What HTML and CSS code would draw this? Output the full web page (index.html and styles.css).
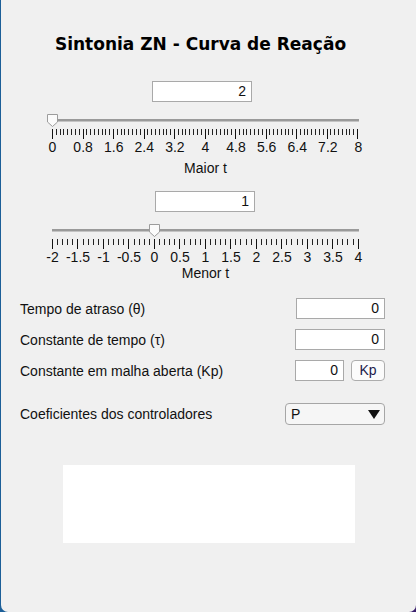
FILE: index.html
```html
<!DOCTYPE html>
<html lang="pt">
<head>
<meta charset="utf-8">
<title>Sintonia ZN - Curva de Reação</title>
<link rel="stylesheet" href="styles.css">
</head>
<body>
<div class="window">
  <h1 class="title">Sintonia ZN - Curva de Reação</h1>

  <section class="slider s1">
    <div class="field slider-field">2</div>
    <div class="track-area">
      <div class="track"></div>
      <svg class="thumb" style="left:-5px" width="11" height="13" viewBox="0 0 11 13"><polygon points="0.5,0.5 10.5,0.5 10.5,8 5.5,12.5 0.5,8" fill="#fbfbfb" stroke="#9c9c9c"/></svg>
    </div>
    <div class="ticks">
      <i class="mj"></i><i></i><i></i><i></i><i></i><i></i><i></i><i></i>
      <i class="mj"></i><i></i><i></i><i></i><i></i><i></i><i></i><i></i>
      <i class="mj"></i><i></i><i></i><i></i><i></i><i></i><i></i><i></i>
      <i class="mj"></i><i></i><i></i><i></i><i></i><i></i><i></i><i></i>
      <i class="mj"></i><i></i><i></i><i></i><i></i><i></i><i></i><i></i>
      <i class="mj"></i><i></i><i></i><i></i><i></i><i></i><i></i><i></i>
      <i class="mj"></i><i></i><i></i><i></i><i></i><i></i><i></i><i></i>
      <i class="mj"></i><i></i><i></i><i></i><i></i><i></i><i></i><i></i>
      <i class="mj"></i><i></i><i></i><i></i><i></i><i></i><i></i><i></i>
      <i class="mj"></i><i></i><i></i><i></i><i></i><i></i><i></i><i></i>
      <i class="mj"></i>
    </div>
    <div class="tick-labels">
      <span>0</span><span>0.8</span><span>1.6</span><span>2.4</span><span>3.2</span><span>4</span><span>4.8</span><span>5.6</span><span>6.4</span><span>7.2</span><span>8</span>
    </div>
    <div class="caption">Maior t</div>
  </section>

  <section class="slider s2">
    <div class="field slider-field">1</div>
    <div class="track-area">
      <div class="track"></div>
      <svg class="thumb" style="left:97px" width="11" height="13" viewBox="0 0 11 13"><polygon points="0.5,0.5 10.5,0.5 10.5,8 5.5,12.5 0.5,8" fill="#fbfbfb" stroke="#9c9c9c"/></svg>
    </div>
    <div class="ticks">
      <i class="mj"></i><i></i><i></i><i></i><i></i>
      <i class="mj"></i><i></i><i></i><i></i><i></i>
      <i class="mj"></i><i></i><i></i><i></i><i></i>
      <i class="mj"></i><i></i><i></i><i></i><i></i>
      <i class="mj"></i><i></i><i></i><i></i><i></i>
      <i class="mj"></i><i></i><i></i><i></i><i></i>
      <i class="mj"></i><i></i><i></i><i></i><i></i>
      <i class="mj"></i><i></i><i></i><i></i><i></i>
      <i class="mj"></i><i></i><i></i><i></i><i></i>
      <i class="mj"></i><i></i><i></i><i></i><i></i>
      <i class="mj"></i><i></i><i></i><i></i><i></i>
      <i class="mj"></i><i></i><i></i><i></i><i></i>
      <i class="mj"></i>
    </div>
    <div class="tick-labels">
      <span>-2</span><span>-1.5</span><span>-1</span><span>-0.5</span><span>0</span><span>0.5</span><span>1</span><span>1.5</span><span>2</span><span>2.5</span><span>3</span><span>3.5</span><span>4</span>
    </div>
    <div class="caption">Menor t</div>
  </section>

  <div class="row r1">
    <span class="label">Tempo de atraso (θ)</span>
    <div class="field f-wide">0</div>
  </div>
  <div class="row r2">
    <span class="label">Constante de tempo (τ)</span>
    <div class="field f-wide2">0</div>
  </div>
  <div class="row r3">
    <span class="label">Constante em malha aberta (Kp)</span>
    <div class="controls">
      <div class="field f-small">0</div>
      <div class="button">Kp</div>
    </div>
  </div>
  <div class="row r4">
    <span class="label">Coeficientes dos controladores</span>
    <div class="dropdown">
      <span>P</span>
      <svg width="12" height="9" viewBox="0 0 12 9"><polygon points="0,0 12,0 6,9" fill="#111"/></svg>
    </div>
  </div>

  <div class="output-box"></div>
</div>
</body>
</html>
```

FILE: styles.css
```css
* { box-sizing: border-box; }

html, body {
  margin: 0;
  padding: 0;
  height: 612px;
  overflow: hidden;
}

body {
  background: linear-gradient(to right, #1c5f98 0%, #235a94 50%, #3a1f6c 100%);
  font-family: "Liberation Sans", Arial, sans-serif;
  font-size: 14px;
  color: #111;
}

.window {
  margin-left: 1px;
  width: 415px;
  height: 612px;
  background: #f0f0f0;
  border-radius: 0 0 7px 7px;
  display: flex;
  flex-direction: column;
}

.title {
  margin: 34px 0 0 0;
  padding-right: 16px;
  font-family: "DejaVu Sans", Verdana, sans-serif;
  font-weight: bold;
  font-size: 17px;
  line-height: 20px;
  text-align: center;
  color: #000;
}

.slider {
  margin-left: 51px;
  width: 307px;
  display: flex;
  flex-direction: column;
}

.s1 { margin-top: 27px; }
.s2 { margin-top: 15px; }

.field {
  height: 21px;
  background: #fff;
  border: 1px solid #a9a9a9;
  text-align: right;
  padding-right: 5px;
  line-height: 19px;
  font-size: 14px;
  color: #111;
}

.slider-field { width: 100px; }
.s1 .slider-field { margin-left: 100px; }
.s2 .slider-field { margin-left: 103px; }

.track-area {
  position: relative;
  height: 15px;
  margin-top: 12px;
}

.track {
  margin-top: 5px;
  height: 3px;
  background: #9a9a9a;
  border-bottom: 1px solid #c4c4c4;
}

.thumb {
  position: absolute;
  top: 0;
  display: block;
}

.ticks {
  display: flex;
  justify-content: space-between;
  align-items: flex-start;
  height: 10px;
}

.ticks i {
  display: block;
  width: 1px;
  height: 6px;
  background: #222;
}

.ticks i.mj {
  height: 10px;
  background: #111;
}

.tick-labels {
  display: flex;
  justify-content: space-between;
  height: 16px;
  line-height: 16px;
  font-size: 14px;
  color: #111;
}

.tick-labels span {
  width: 1px;
  display: flex;
  justify-content: center;
  white-space: nowrap;
}

.caption {
  text-align: center;
  line-height: 16px;
  padding-left: 0;
  color: #111;
}

.s1 .caption { margin-top: 5px; }
.s2 .caption { margin-top: 0; }

.row {
  display: flex;
  justify-content: space-between;
  align-items: center;
  height: 21px;
  padding: 0 31px 0 19px;
}

.r1 { margin-top: 17px; }
.r2 { margin-top: 10px; }
.r3 { margin-top: 10px; }
.r4 { margin-top: 22px; height: 22px; }

.label { color: #111; }

.f-wide { width: 89px; }
.f-wide2 { width: 90px; }
.f-small { width: 49px; }

.controls {
  display: flex;
  gap: 7px;
}

.button {
  width: 34px;
  height: 21px;
  border: 1px solid #adadad;
  border-radius: 4px;
  background: #fbfbfb;
  text-align: center;
  line-height: 19px;
  color: #1b1b4b;
}

.dropdown {
  width: 100px;
  height: 22px;
  border: 1px solid #a6a6a6;
  border-radius: 4px;
  background: #f6f6f6;
  display: flex;
  align-items: center;
  justify-content: space-between;
  padding: 0 4px 0 5px;
}

.dropdown svg { display: block; }

.output-box {
  margin-top: 40px;
  margin-left: 62px;
  width: 292px;
  height: 78px;
  background: #fff;
}
```
